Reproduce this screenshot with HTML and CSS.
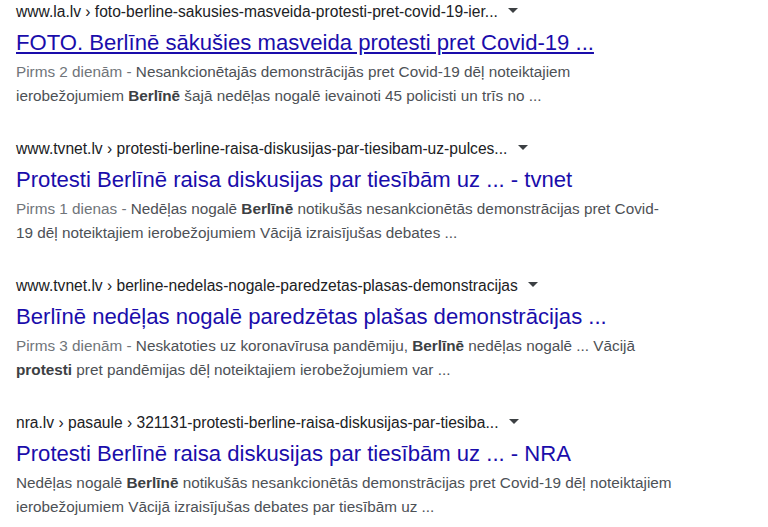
FILE: index.html
```html
<!DOCTYPE html>
<html lang="lv">
<head>
<meta charset="utf-8">
<title>Meklēšanas rezultāti</title>
<link rel="stylesheet" href="styles.css">
</head>
<body>
<div class="results">
  <div class="result">
    <div class="cite">www.la.lv › foto-berline-sakusies-masveida-protesti-pret-covid-19-ier... <span class="drop"></span></div>
    <a class="title hover" href="#">FOTO. Berlīnē sākušies masveida protesti pret Covid-19 ...</a>
    <div class="snippet"><span class="date">Pirms 2 dienām - </span>Nesankcionētajās demonstrācijās pret Covid-19 dēļ noteiktajiem ierobežojumiem <b>Berlīnē</b> šajā nedēļas nogalē ievainoti 45 policisti un trīs no ...</div>
  </div>
  <div class="result">
    <div class="cite">www.tvnet.lv › protesti-berline-raisa-diskusijas-par-tiesibam-uz-pulces... <span class="drop"></span></div>
    <a class="title" href="#">Protesti Berlīnē raisa diskusijas par tiesībām uz ... - tvnet</a>
    <div class="snippet"><span class="date">Pirms 1 dienas - </span>Nedēļas nogalē <b>Berlīnē</b> notikušās nesankcionētās demonstrācijas pret Covid-<wbr>19 dēļ noteiktajiem ierobežojumiem Vācijā izraisījušas debates ...</div>
  </div>
  <div class="result">
    <div class="cite">www.tvnet.lv › berline-nedelas-nogale-paredzetas-plasas-demonstracijas <span class="drop"></span></div>
    <a class="title" href="#">Berlīnē nedēļas nogalē paredzētas plašas demonstrācijas ...</a>
    <div class="snippet"><span class="date">Pirms 3 dienām - </span>Neskatoties uz koronavīrusa pandēmiju, <b>Berlīnē</b> nedēļas nogalē ... Vācijā <b>protesti</b> pret pandēmijas dēļ noteiktajiem ierobežojumiem var ...</div>
  </div>
  <div class="result">
    <div class="cite">nra.lv › pasaule › 321131-protesti-berline-raisa-diskusijas-par-tiesiba... <span class="drop"></span></div>
    <a class="title" href="#">Protesti Berlīnē raisa diskusijas par tiesībām uz ... - NRA</a>
    <div class="snippet">Nedēļas nogalē <b>Berlīnē</b> notikušās nesankcionētās demonstrācijas pret Covid-19 dēļ noteiktajiem ierobežojumiem Vācijā izraisījušas debates par tiesībām uz ...</div>
  </div>
</div>
</body>
</html>
```
FILE: styles.css
```css
html, body {
  margin: 0;
  padding: 0;
  background: #ffffff;
}
body {
  font-family: "Liberation Sans", Arial, sans-serif;
}
.results {
  padding: 2px 0 0 16px;
  width: 658px;
}
.result {
  margin-bottom: 31px;
}
.cite {
  font-size: 15.6px;
  line-height: 20px;
  color: #202124;
  white-space: nowrap;
}
.drop {
  display: inline-block;
  width: 0;
  height: 0;
  margin-left: 6px;
  vertical-align: middle;
  border-left: 5px solid transparent;
  border-right: 5px solid transparent;
  border-top: 5px solid #3c4043;
  position: relative;
  top: -2px;
}
.title {
  display: block;
  margin-top: 8px;
  font-size: 22.1px;
  line-height: 26px;
  color: #1a0dab;
  text-decoration: none;
}
.title.hover {
  text-decoration: underline;
}
.snippet {
  margin-top: 4px;
  font-size: 15.3px;
  line-height: 24px;
  color: #4d5156;
}
.snippet b {
  color: #3c4043;
  font-weight: bold;
}
.date {
  color: #70757a;
}
```
